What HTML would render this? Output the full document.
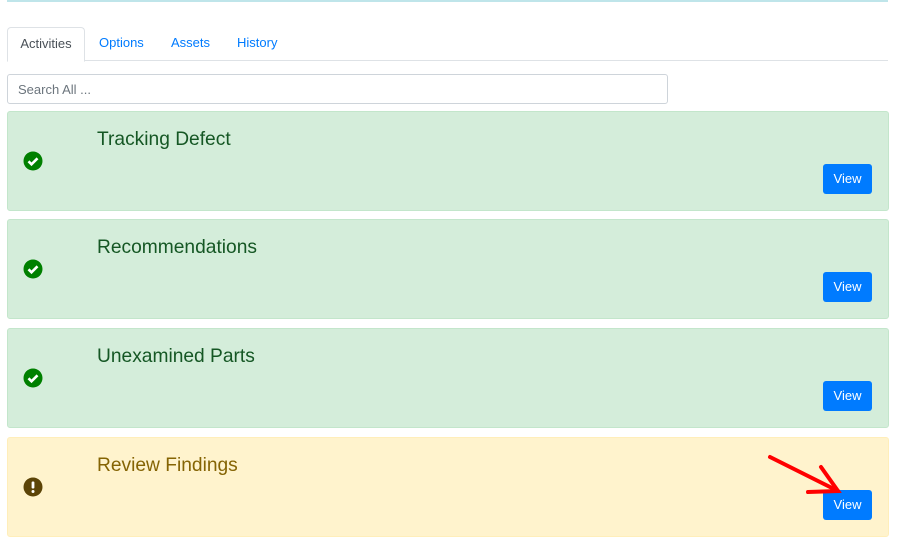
<!DOCTYPE html>
<html><head><meta charset="utf-8"><style>
*{box-sizing:border-box;margin:0;padding:0}
body{width:898px;height:541px;background:#fff;font-family:"Liberation Sans",sans-serif;position:relative;overflow:hidden}
.top{position:absolute;left:7px;top:0;width:881px;height:2px;background:#bfe5ea}
.tabs{position:absolute;left:7px;top:27px;width:881px;height:34px;border-bottom:1px solid #dee2e6}
.tab{position:absolute;top:0;height:34px;line-height:32px;font-size:13px;color:#007bff}
.tab.active{left:0;width:78px;border:1px solid #dee2e6;border-bottom:1px solid #fff;border-radius:4px 4px 0 0;color:#495057;text-align:center;background:#fff;height:35px;line-height:31px}
.search{position:absolute;left:7px;top:74px;width:661px;height:30px;border:1px solid #ced4da;border-radius:3px;font-size:13px;color:#6c757d;padding:7px 10px}
.card{position:absolute;left:7px;width:882px;height:100px;border:1px solid #c3e6cb;background:#d4edda;border-radius:3px}
.card h2{position:absolute;left:89px;top:17px;font-weight:normal;font-size:19.2px;color:#155724}
.card .ic{position:absolute;left:15px;top:39px}
.btn{position:absolute;left:815px;top:52px;width:49px;height:30px;background:#007bff;color:#fff;border-radius:3px;font-size:13px;text-align:center;line-height:30px}
.card.warn{background:#fff3cd;border-color:#ffeeba}
.card.warn h2{color:#856404}
</style></head><body>
<div class="top"></div>
<div class="tabs">
<div class="tab active">Activities</div>
<div class="tab" style="left:92px">Options</div>
<div class="tab" style="left:164px">Assets</div>
<div class="tab" style="left:230px">History</div>
</div>
<div class="search">Search All ...</div>

<div class="card" style="top:111px"><div class="ic"><svg width="20" height="20" viewBox="0 0 20 20"><circle cx="10" cy="10" r="9.5" fill="#008000"/><path d="M5.5 10.3l3 3 6-6" stroke="#fff" stroke-width="2.6" fill="none"/></svg></div><h2>Tracking Defect</h2><div class="btn">View</div></div>
<div class="card" style="top:219px"><div class="ic"><svg width="20" height="20" viewBox="0 0 20 20"><circle cx="10" cy="10" r="9.5" fill="#008000"/><path d="M5.5 10.3l3 3 6-6" stroke="#fff" stroke-width="2.6" fill="none"/></svg></div><h2>Recommendations</h2><div class="btn">View</div></div>
<div class="card" style="top:328px"><div class="ic"><svg width="20" height="20" viewBox="0 0 20 20"><circle cx="10" cy="10" r="9.5" fill="#008000"/><path d="M5.5 10.3l3 3 6-6" stroke="#fff" stroke-width="2.6" fill="none"/></svg></div><h2>Unexamined Parts</h2><div class="btn">View</div></div>
<div class="card warn" style="top:437px"><div class="ic"><svg width="20" height="20" viewBox="0 0 20 20"><circle cx="10" cy="10" r="9.5" fill="#5c4407"/><rect x="8.6" y="4.5" width="2.8" height="7" rx="1" fill="#fff"/><circle cx="10" cy="14.5" r="1.5" fill="#fff"/></svg></div><h2>Review Findings</h2><div class="btn">View</div></div>

<svg style="position:absolute;left:0;top:0" width="898" height="541"><g stroke="#ff0000" stroke-width="4" stroke-linecap="round" fill="none"><path d="M770 457L838 491"/><path d="M821 467L838 491L808 492"/></g></svg>
</body></html>
